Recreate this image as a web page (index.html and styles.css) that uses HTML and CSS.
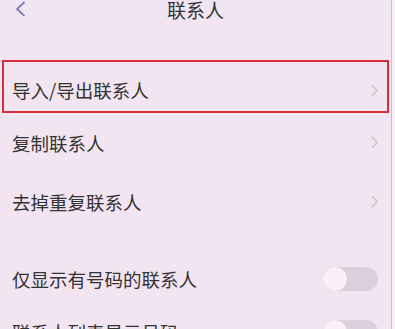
FILE: index.html
```html
<!DOCTYPE html>
<html lang="zh-CN">
<head>
<meta charset="utf-8">
<title>联系人</title>
<link rel="stylesheet" href="styles.css">
</head>
<body>
<div class="screen">
  <header class="header">
    <svg class="back" width="12" height="16" viewBox="0 0 12 16"><path d="M10 1.5 L3 8 L10 14.5" fill="none" stroke="#7c80b4" stroke-width="1.8" stroke-linecap="round" stroke-linejoin="round"/></svg>
    <div class="title">联系人</div>
  </header>
  <div class="list">
    <div class="row row-first highlight">
      <span class="label">导入/导出联系人</span>
      <svg class="chev" width="7" height="13" viewBox="0 0 7 13"><path d="M1 1 L6 6.5 L1 12" fill="none" stroke="#cbc0ca" stroke-width="1.3"/></svg>
    </div>
    <div class="row">
      <span class="label">复制联系人</span>
      <svg class="chev" width="7" height="13" viewBox="0 0 7 13"><path d="M1 1 L6 6.5 L1 12" fill="none" stroke="#cbc0ca" stroke-width="1.3"/></svg>
    </div>
    <div class="row">
      <span class="label">去掉重复联系人</span>
      <svg class="chev" width="7" height="13" viewBox="0 0 7 13"><path d="M1 1 L6 6.5 L1 12" fill="none" stroke="#cbc0ca" stroke-width="1.3"/></svg>
    </div>
    <div class="row row-toggle section-start">
      <span class="label">仅显示有号码的联系人</span>
      <span class="toggle"><span class="knob"></span></span>
    </div>
    <div class="row row-toggle">
      <span class="label">联系人列表显示号码</span>
      <span class="toggle"><span class="knob"></span></span>
    </div>
  </div>
</div>
</body>
</html>
```

FILE: styles.css
```css
html, body {
  margin: 0;
  padding: 0;
}
body {
  width: 395px;
  height: 329px;
  overflow: hidden;
  background: #f7eff6;
  font-family: "Noto Sans CJK SC", "Noto Sans", sans-serif;
  color: #333333;
}
.screen {
  width: 391px;
  height: 329px;
  background: #f2e5f1;
  border-right: 1px solid #cdc2cc;
  overflow: hidden;
}
.header {
  height: 20px;
  display: flex;
  align-items: center;
  justify-content: center;
  position: relative;
  background: #f0e5f2;
}
.back {
  position: absolute;
  left: 14px;
  top: 1px;
}
.title {
  font-size: 19px;
  line-height: 20px;
  color: #333;
  margin-top: -1px;
}
.list {
  margin-top: 40px;
  margin-left: 2px;
  width: 387px;
}
.row {
  box-sizing: border-box;
  height: 59px;
  display: flex;
  align-items: center;
  justify-content: space-between;
  padding: 0 10px 0 8px;
  border: 2px solid transparent;
}
.row-first {
  height: 53px;
  padding-top: 7px;
}
.highlight {
  border-color: #d8303b;
}
.label {
  font-size: 18.5px;
  line-height: 22px;
}
.row-toggle {
  height: 53px;
}
.section-start {
  margin-top: 21px;
}
.chev {
  display: block;
  margin-right: -1px;
}
.toggle {
  width: 55px;
  height: 24px;
  border-radius: 12px;
  background: #ddd0dc;
  display: flex;
  align-items: center;
  margin-right: -1px;
}
.knob {
  width: 24px;
  height: 24px;
  border-radius: 50%;
  background: #f9f0f8;
  box-shadow: 0 0 1px rgba(0,0,0,0.08);
}
```
